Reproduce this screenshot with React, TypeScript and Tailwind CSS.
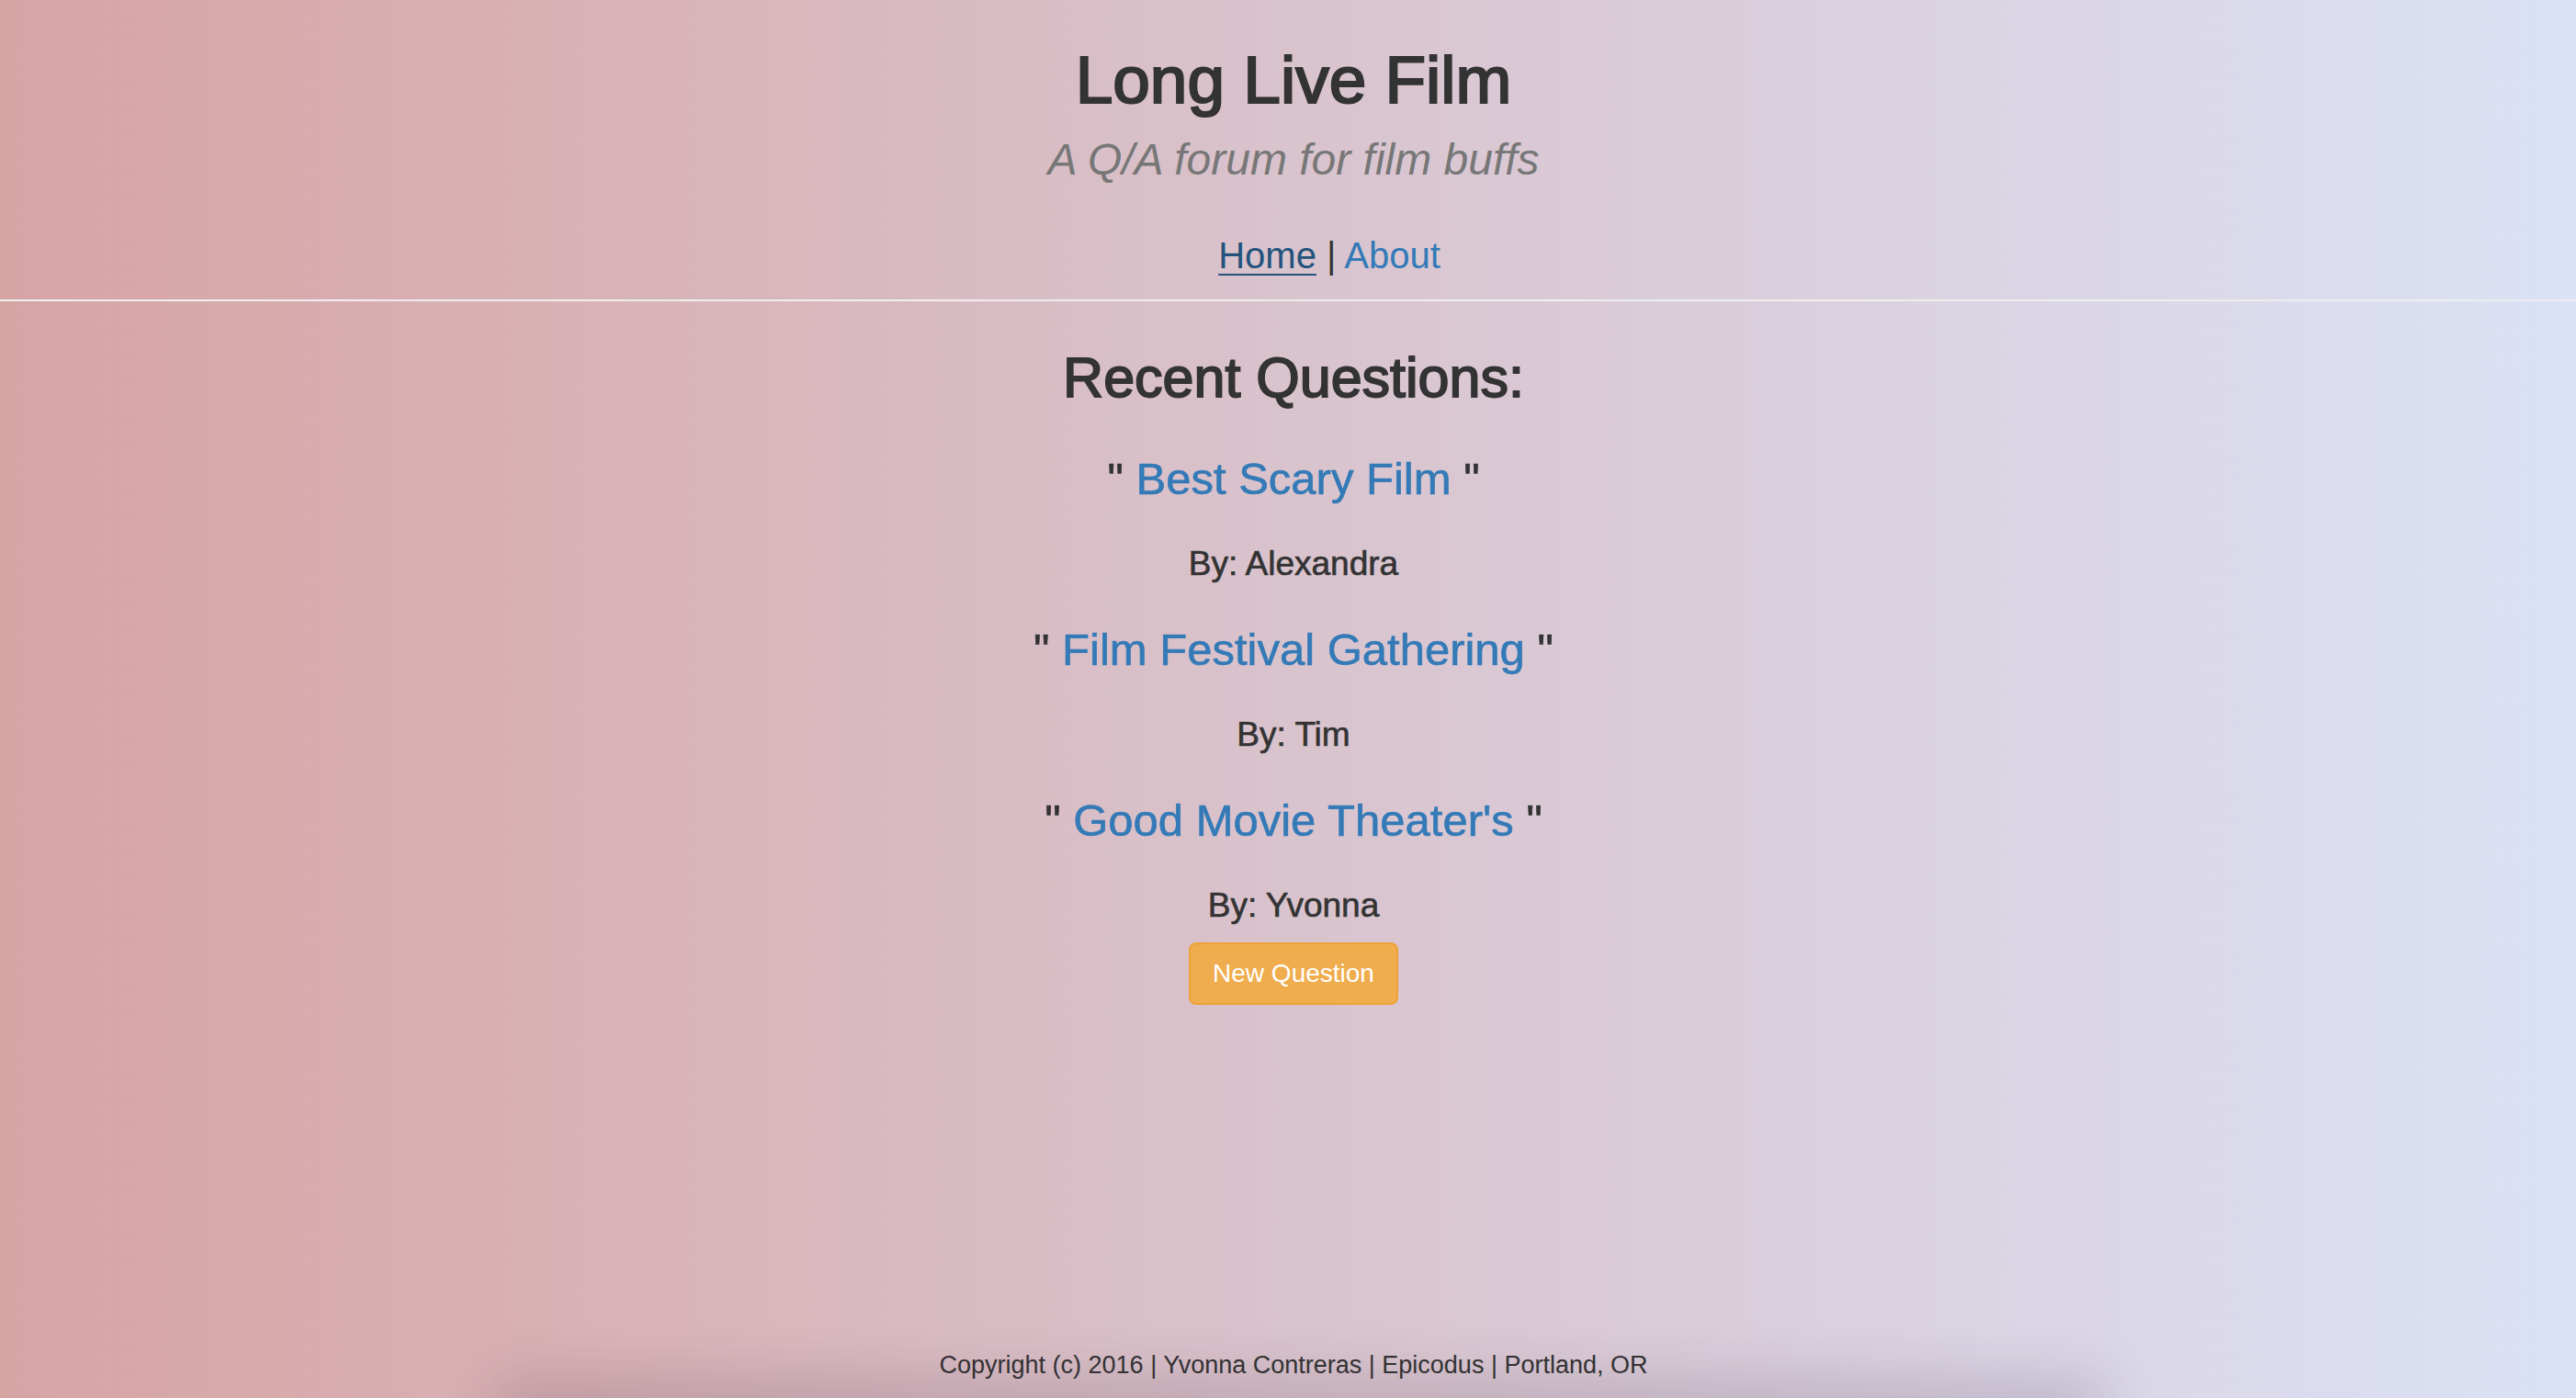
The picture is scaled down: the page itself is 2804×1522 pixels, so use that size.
const questions = [
    { title: "Best Scary Film", author: "Alexandra" },
    { title: "Film Festival Gathering", author: "Tim" },
    { title: "Good Movie Theater's", author: "Yvonna" },
]

export default function App() {
    return (
        <div className="relative flex flex-col h-screen overflow-hidden pl-[12px] bg-linear-to-r from-[#d7a4a4] via-[#d9c3cd] to-[#dbe2f6] text-[#333] font-['Liberation_Sans',Arial,sans-serif] text-center">
            <header className="pt-[47px]">
                <h1 className="text-[73px] leading-[80px] [-webkit-text-stroke:0.03em_currentColor]">Long Live Film</h1>
                <h3 className="mt-[20px] text-[48px] leading-[53px] italic text-[#777]">A Q/A forum for film buffs</h3>
                <nav className="mt-[56px] pl-[78px] text-[40px] leading-[44px]">
                    <a href="#" className="text-[#23527c] underline decoration-2 underline-offset-[6px]">Home</a>
                    {" | "}
                    <a href="#" className="text-[#337ab7]">About</a>
                </nav>
                <hr className="mt-[26px] -ml-[12px] border-0 border-t-2 border-[#eeeeee]" />
            </header>

            <main className="flex flex-col items-center flex-1">
                <h2 className="mt-[50px] mb-[4px] text-[61px] leading-[66px] [-webkit-text-stroke:0.03em_currentColor]">Recent Questions:</h2>
                {questions.map((q, i) => (
                    <div key={i} className="flex flex-col items-center [-webkit-text-stroke:0.04em_currentColor]">
                        <h3 className="mt-[47px] text-[49px] leading-[53px]">
                            " <a href="#" className="text-[#337ab7]">{q.title}</a> "
                        </h3>
                        <h4 className="mt-[46px] text-[37px] leading-[40px]">By: {q.author}</h4>
                    </div>
                ))}
                <button
                    type="button"
                    className="mt-[20px] px-[24px] py-[12px] text-[28px] leading-[40px] text-white bg-[#f0ad4e] border-2 border-[#eea236] rounded-[8px]"
                >
                    New Question
                </button>
            </main>

            <footer className="pb-[16px] text-[27px] leading-[40px]">
                Copyright (c) 2016 | Yvonna Contreras | Epicodus | Portland, OR
            </footer>
            <div className="absolute bottom-[-24px] left-[560px] w-[1710px] h-[24px] shadow-[0_0_60px_20px_rgba(60,40,60,0.18)]"></div>
        </div>
    )
}
